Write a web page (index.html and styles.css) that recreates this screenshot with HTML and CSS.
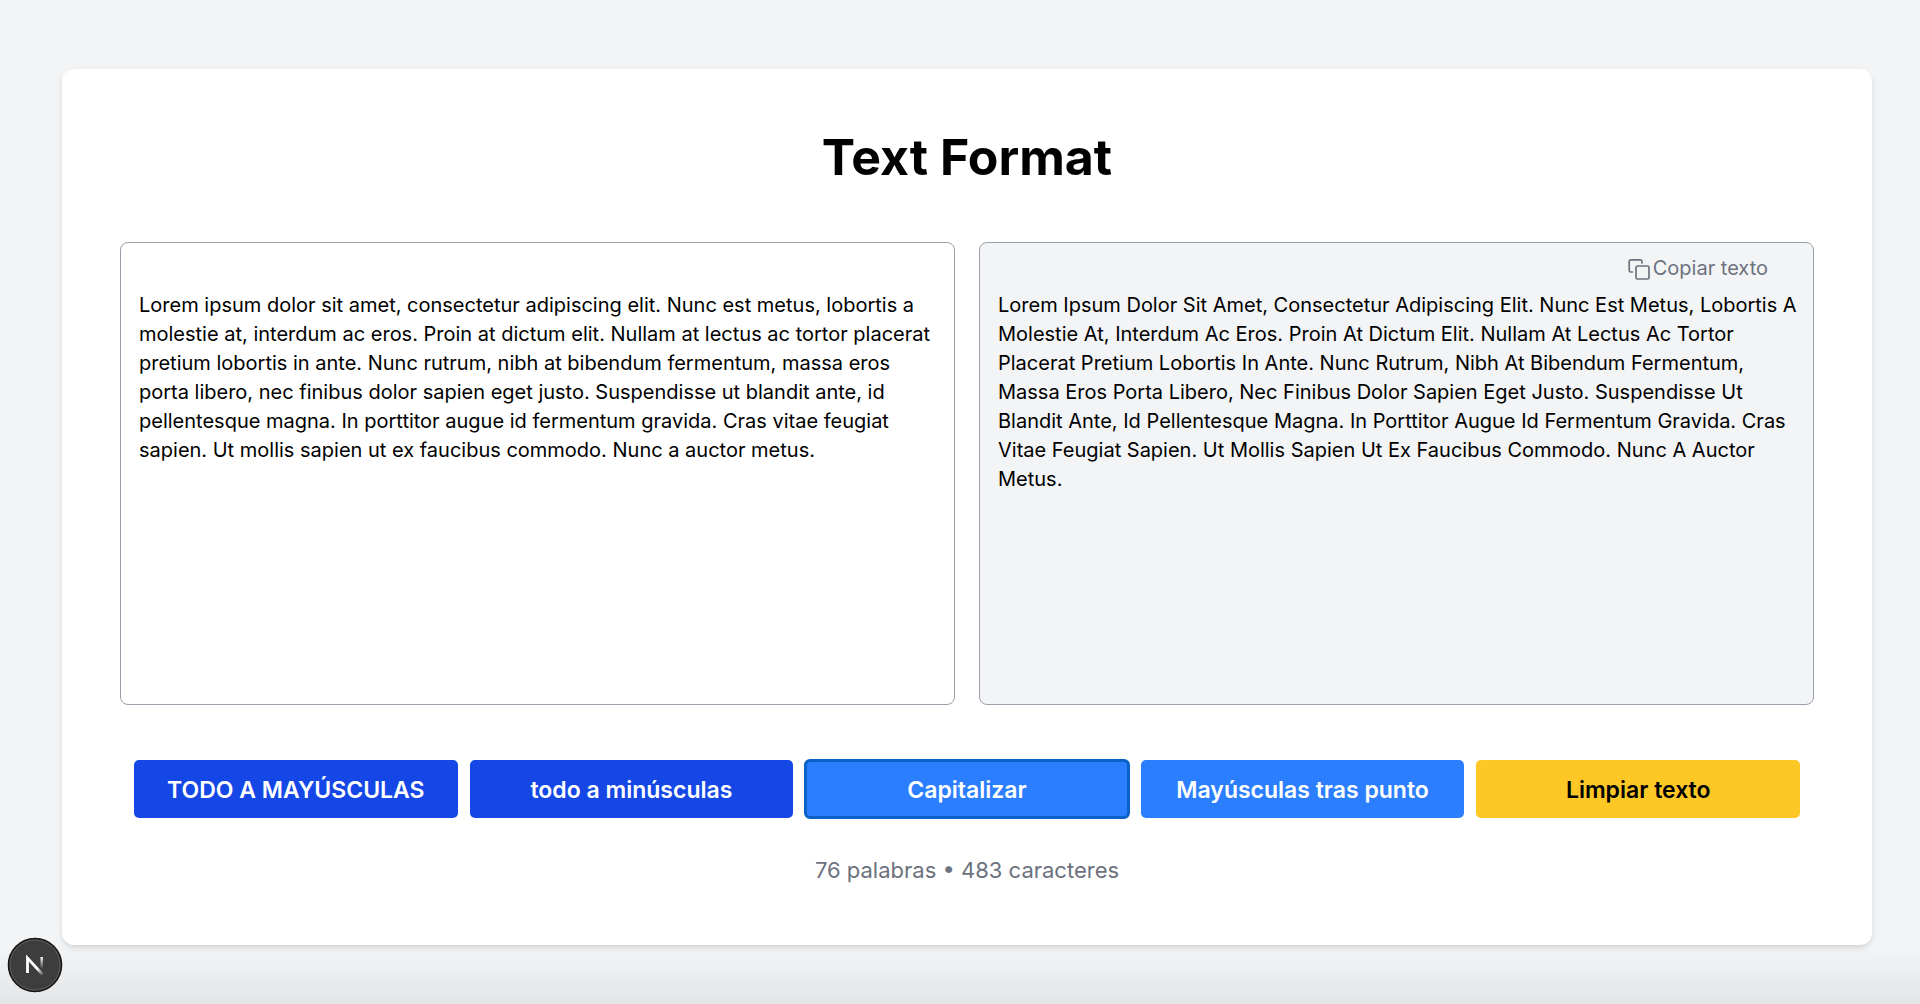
FILE: index.html
```html
<!DOCTYPE html>
<html lang="es">
<head>
<meta charset="utf-8">
<meta name="viewport" content="width=device-width, initial-scale=1">
<title>Text Format</title>
<link rel="stylesheet" href="styles.css">
</head>
<body>
<main class="page">
  <section class="card">
    <h1 class="title">Text Format</h1>
    <div class="editors">
      <textarea class="editor" aria-label="Texto original" spellcheck="false">Lorem ipsum dolor sit amet, consectetur adipiscing elit. Nunc est metus, lobortis a molestie at, interdum ac eros. Proin at dictum elit. Nullam at lectus ac tortor placerat pretium lobortis in ante. Nunc rutrum, nibh at bibendum fermentum, massa eros porta libero, nec finibus dolor sapien eget justo. Suspendisse ut blandit ante, id pellentesque magna. In porttitor augue id fermentum gravida. Cras vitae feugiat sapien. Ut mollis sapien ut ex faucibus commodo. Nunc a auctor metus.</textarea>
      <div class="output">
        <textarea class="editor editor-output" aria-label="Texto formateado" spellcheck="false" readonly>Lorem Ipsum Dolor Sit Amet, Consectetur Adipiscing Elit. Nunc Est Metus, Lobortis A Molestie At, Interdum Ac Eros. Proin At Dictum Elit. Nullam At Lectus Ac Tortor Placerat Pretium Lobortis In Ante. Nunc Rutrum, Nibh At Bibendum Fermentum, Massa Eros Porta Libero, Nec Finibus Dolor Sapien Eget Justo. Suspendisse Ut Blandit Ante, Id Pellentesque Magna. In Porttitor Augue Id Fermentum Gravida. Cras Vitae Feugiat Sapien. Ut Mollis Sapien Ut Ex Faucibus Commodo. Nunc A Auctor Metus.</textarea>
        <button class="copy" type="button">
          <svg class="copy-icon" viewBox="0 0 24 24" aria-hidden="true">
            <rect x="9" y="9" width="13" height="13" rx="1.6"/>
            <path d="M15 6V4.4A1.6 1.6 0 0 0 13.4 2.8H3.8A1.6 1.6 0 0 0 2.2 4.4V13.4A1.6 1.6 0 0 0 3.8 15H5.4"/>
          </svg>
          <span>Copiar texto</span>
        </button>
      </div>
    </div>
    <div class="actions">
      <button class="action action-case" type="button">TODO A MAYÚSCULAS</button>
      <button class="action action-case" type="button">todo a minúsculas</button>
      <button class="action action-words action-active" type="button">Capitalizar</button>
      <button class="action action-words" type="button">Mayúsculas tras punto</button>
      <button class="action action-clear" type="button">Limpiar texto</button>
    </div>
    <p class="count">76 palabras • 483 caracteres</p>
  </section>
</main>
<div class="fade"></div>
<button class="dev" type="button" aria-label="Next.js">
  <svg class="dev-icon" viewBox="0 0 56 56" aria-hidden="true">
    <defs>
      <linearGradient id="diagonal" gradientUnits="userSpaceOnUse" x1="31" y1="31" x2="37" y2="38">
        <stop offset="0" stop-color="#fff"/>
        <stop offset="1" stop-color="#fff" stop-opacity="0"/>
      </linearGradient>
      <linearGradient id="stem" gradientUnits="userSpaceOnUse" x1="35" y1="20" x2="35" y2="32">
        <stop offset="0" stop-color="#fff"/>
        <stop offset="1" stop-color="#fff" stop-opacity="0"/>
      </linearGradient>
    </defs>
    <circle cx="28" cy="28" r="26.5" fill="#3d3d3d" stroke="#171717" stroke-width="1.6"/>
    <circle cx="28" cy="28" r="25" fill="none" stroke="#5c5c5c" stroke-width="1"/>
    <path d="M20.5 36V21L36 38" fill="none" stroke="url(#diagonal)" stroke-width="2.8"/>
    <path d="M34.7 20V32" stroke="url(#stem)" stroke-width="2.4"/>
  </svg>
</button>
</body>
</html>
```
FILE: styles.css
```css
* {
  box-sizing: border-box;
}

body {
  margin: 0;
  min-height: 100vh;
  background: #f3f4f6;
  color: #000;
  font-family: Inter, "Liberation Sans", sans-serif;
}

button,
textarea {
  font: inherit;
  color: inherit;
}

.page {
  padding: 69px 48px 58px 62px;
}

.card {
  padding: 58px;
  border-radius: 12px;
  background: #fff;
  box-shadow: 0 4px 8px -1px rgb(0 0 0 / 10%), 0 2px 5px -2px rgb(0 0 0 / 10%);
}

.title {
  margin: 0 0 55px;
  font-size: 50px;
  line-height: 60px;
  font-weight: 700;
  text-align: center;
}

.editors {
  display: grid;
  grid-template-columns: 1fr 1fr;
  gap: 24px;
}

.output {
  position: relative;
}

.editor {
  display: block;
  width: 100%;
  height: 463px;
  padding: 48px 12px 18px 18px;
  border: 1px solid #9a9fa9;
  border-radius: 8px;
  outline: none;
  background: #fff;
  font-size: 20px;
  line-height: 29px;
  resize: none;
}

.editor-output {
  background: #f3f4f6;
}

.copy {
  position: absolute;
  top: 12px;
  right: 46px;
  display: flex;
  align-items: center;
  gap: 2px;
  padding: 0;
  border: 0;
  background: none;
  color: #6c727e;
  font-size: 20px;
  line-height: 29px;
}

.copy-icon {
  width: 24px;
  height: 24px;
  fill: none;
  stroke: currentColor;
  stroke-width: 1.7;
  stroke-linecap: round;
  stroke-linejoin: round;
}

.actions {
  display: grid;
  grid-template-columns: repeat(5, 1fr);
  gap: 12px;
  margin-top: 55px;
  padding: 0 14px;
}

.action {
  height: 58px;
  padding: 2px 0 0;
  border: 0;
  border-radius: 5px;
  font-size: 23px;
  font-weight: 600;
  white-space: nowrap;
}

.action-case {
  background: #1447e6;
  color: #fff;
}

.action-words {
  background: #2b7fff;
  color: #fff;
}

.action-active {
  outline: 3px solid #0a62c6;
  outline-offset: -2px;
}

.action-clear {
  background: #fdc726;
}

.count {
  margin: 36px 0 0;
  color: #6c727e;
  font-size: 22px;
  line-height: 33px;
  text-align: center;
}

.fade {
  position: fixed;
  inset: auto 0 0;
  height: 56px;
  background: linear-gradient(rgb(0 0 0 / 0%), rgb(0 0 0 / 6%));
  pointer-events: none;
}

.dev {
  position: fixed;
  bottom: 11px;
  left: 7px;
  padding: 0;
  border: 0;
  background: none;
}

.dev-icon {
  display: block;
  width: 56px;
  height: 56px;
}
```
